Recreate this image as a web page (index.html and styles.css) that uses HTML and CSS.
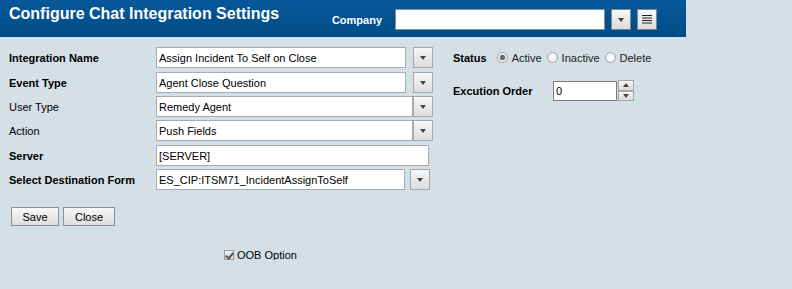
FILE: index.html
```html
<!DOCTYPE html>
<html lang="en">
<head>
  <meta charset="UTF-8">
  <title>Configure Chat Integration Settings</title>
  <link rel="stylesheet" href="styles.css">
</head>
<body>
  <header class="titlebar">
    <h1 class="title">Configure Chat Integration Settings</h1>
    <div class="company">
      <label class="company-label" for="company">Company</label>
      <input class="company-input" id="company" type="text">
      <button class="btn-icon" type="button"><span class="caret"></span></button>
      <button class="btn-icon" type="button">
        <svg width="10" height="9" viewBox="0 0 10 9"><path d="M0 .5h10M0 3h10M0 5.5h10M0 8h10" stroke="#222" stroke-width="1"/></svg>
      </button>
    </div>
  </header>

  <main class="form">
    <div class="col-left">
      <div class="fields">
        <label class="lbl">Integration Name</label>
        <div class="ctl"><input class="txt w250" type="text" value="Assign Incident To Self on Close"><button class="btn-drop gap7" type="button"><span class="caret"></span></button></div>

        <label class="lbl">Event Type</label>
        <div class="ctl"><input class="txt w250" type="text" value="Agent Close Question"><button class="btn-drop gap7" type="button"><span class="caret"></span></button></div>

        <label class="lbl plain">User Type</label>
        <div class="ctl"><input class="txt w257" type="text" value="Remedy Agent"><button class="btn-drop" type="button"><span class="caret"></span></button></div>

        <label class="lbl plain">Action</label>
        <div class="ctl"><input class="txt w257" type="text" value="Push Fields"><button class="btn-drop" type="button"><span class="caret"></span></button></div>

        <label class="lbl">Server</label>
        <div class="ctl"><input class="txt w273" type="text" value="[SERVER]"></div>

        <label class="lbl">Select Destination Form</label>
        <div class="ctl"><input class="txt w249" type="text" value="ES_CIP:ITSM71_IncidentAssignToSelf"><button class="btn-drop gap5" type="button"><span class="caret"></span></button></div>
      </div>

      <div class="actions">
        <button class="btn w48" type="button">Save</button>
        <button class="btn w52" type="button">Close</button>
      </div>

      <label class="oob"><input class="chk" type="checkbox" checked disabled> OOB Option</label>
    </div>

    <div class="col-right">
      <div class="status">
        <span class="lbl">Status</span>
        <label class="opt"><input class="radio" type="radio" name="status" checked disabled> Active</label>
        <label class="opt"><input class="radio" type="radio" name="status" disabled> Inactive</label>
        <label class="opt"><input class="radio" type="radio" name="status" disabled> Delete</label>
      </div>
      <div class="order">
        <label class="lbl order-label">Excution Order</label>
        <input class="txt num" type="text" value="0">
        <div class="spin">
          <button class="spin-btn" type="button"><span class="caret up"></span></button>
          <button class="spin-btn" type="button"><span class="caret"></span></button>
        </div>
      </div>
    </div>
  </main>
</body>
</html>
```

FILE: styles.css
```css
body { margin: 0; background: #d4dfe6; font-family: "Liberation Sans", Arial, sans-serif; font-size: 11px; color: #000; }
button, input { font-family: inherit; font-size: 11px; margin: 0; }

/* title bar */
.titlebar { width: 686px; height: 37px; display: flex; justify-content: space-between; background: linear-gradient(#06589a, #004b85); }
.title { margin: 0; padding: 6px 0 0 9px; font-size: 16px; line-height: 16px; font-weight: bold; color: #fff; }
.company { display: flex; align-items: center; gap: 6px; padding: 9px 29px 0 0; height: 21px; }
.company-label { color: #fff; font-weight: bold; margin-right: 7px; }
.company-input { width: 210px; height: 21px; box-sizing: border-box; border: 1px solid #7d8f9e; background: #fff; }

.btn-icon, .btn-drop { width: 20px; height: 21px; padding: 0; box-sizing: border-box; display: flex; align-items: center; justify-content: center; border: 1px solid #a3a8ac; background: linear-gradient(#f7f7f7, #dcdcdc); }
.btn-icon { border-color: #7a8895; }
.caret { width: 0; height: 0; border-left: 3.5px solid transparent; border-right: 3.5px solid transparent; border-top: 4px solid #444; }
.caret.up { border-top: 0; border-bottom: 4px solid #444; }

/* form */
.form { display: flex; padding: 10px 0 0 9px; }
.col-left { width: 444px; }
.fields { display: grid; grid-template-columns: 147px auto; grid-template-rows: 22px 21px 21px 22px 21px 21px; row-gap: 3px; align-items: center; }
.lbl { font-weight: bold; white-space: nowrap; }
.lbl.plain { font-weight: normal; }
.ctl { display: flex; height: 21px; align-self: start; }
.txt { height: 21px; box-sizing: border-box; border: 1px solid #a5abb1; background: #fff; padding: 0 2px; }
.w249 { width: 249px; }
.w250 { width: 250px; }
.w257 { width: 257px; }
.w273 { width: 273px; }
.gap7 { margin-left: 7px; }
.gap5 { margin-left: 5px; }

.actions { display: flex; gap: 4px; margin: 17px 0 0 2px; }
.btn { height: 19px; padding: 0; border: 1px solid #8e9296; background: linear-gradient(#f8f8f8, #dddddd); }
.w48 { width: 48px; }
.w52 { width: 52px; }

.oob { display: flex; align-items: center; gap: 3px; margin: 23px 0 0 215px; height: 11px; }
.chk { appearance: none; width: 10px; height: 10px; margin: 0; position: relative; border: 1px solid #9a9a9a; background: linear-gradient(#f0f0f0, #dadada); }
.chk::after { content: ""; position: absolute; left: 2px; top: 0; width: 3px; height: 6px; border-right: 2px solid #555; border-bottom: 2px solid #555; transform: rotate(40deg); }

/* right column */
.status { display: flex; align-items: center; height: 21px; }
.status .lbl { margin-right: 10px; }
.opt { display: flex; align-items: center; gap: 4px; margin-right: 5px; color: #222; }
.radio { appearance: none; width: 11px; height: 11px; margin: 0; border-radius: 50%; border: 1px solid #a2a6aa; background: radial-gradient(#ffffff, #e4e4e4); }
.radio:checked { background: radial-gradient(circle, #6c6c6c 0 2.5px, #ececec 3px, #dcdcdc); }

.order { display: flex; align-items: center; margin-top: 12px; height: 21px; }
.order-label { width: 100px; }
.num { width: 64px; height: 20px; border-color: #7a7a7a; }
.spin { display: flex; flex-direction: column; margin-left: 1px; height: 21px; }
.spin-btn { width: 16px; height: 10.5px; padding: 0; box-sizing: border-box; display: flex; align-items: center; justify-content: center; border: 1px solid #a3a8ac; background: linear-gradient(#f7f7f7, #dcdcdc); }
```
